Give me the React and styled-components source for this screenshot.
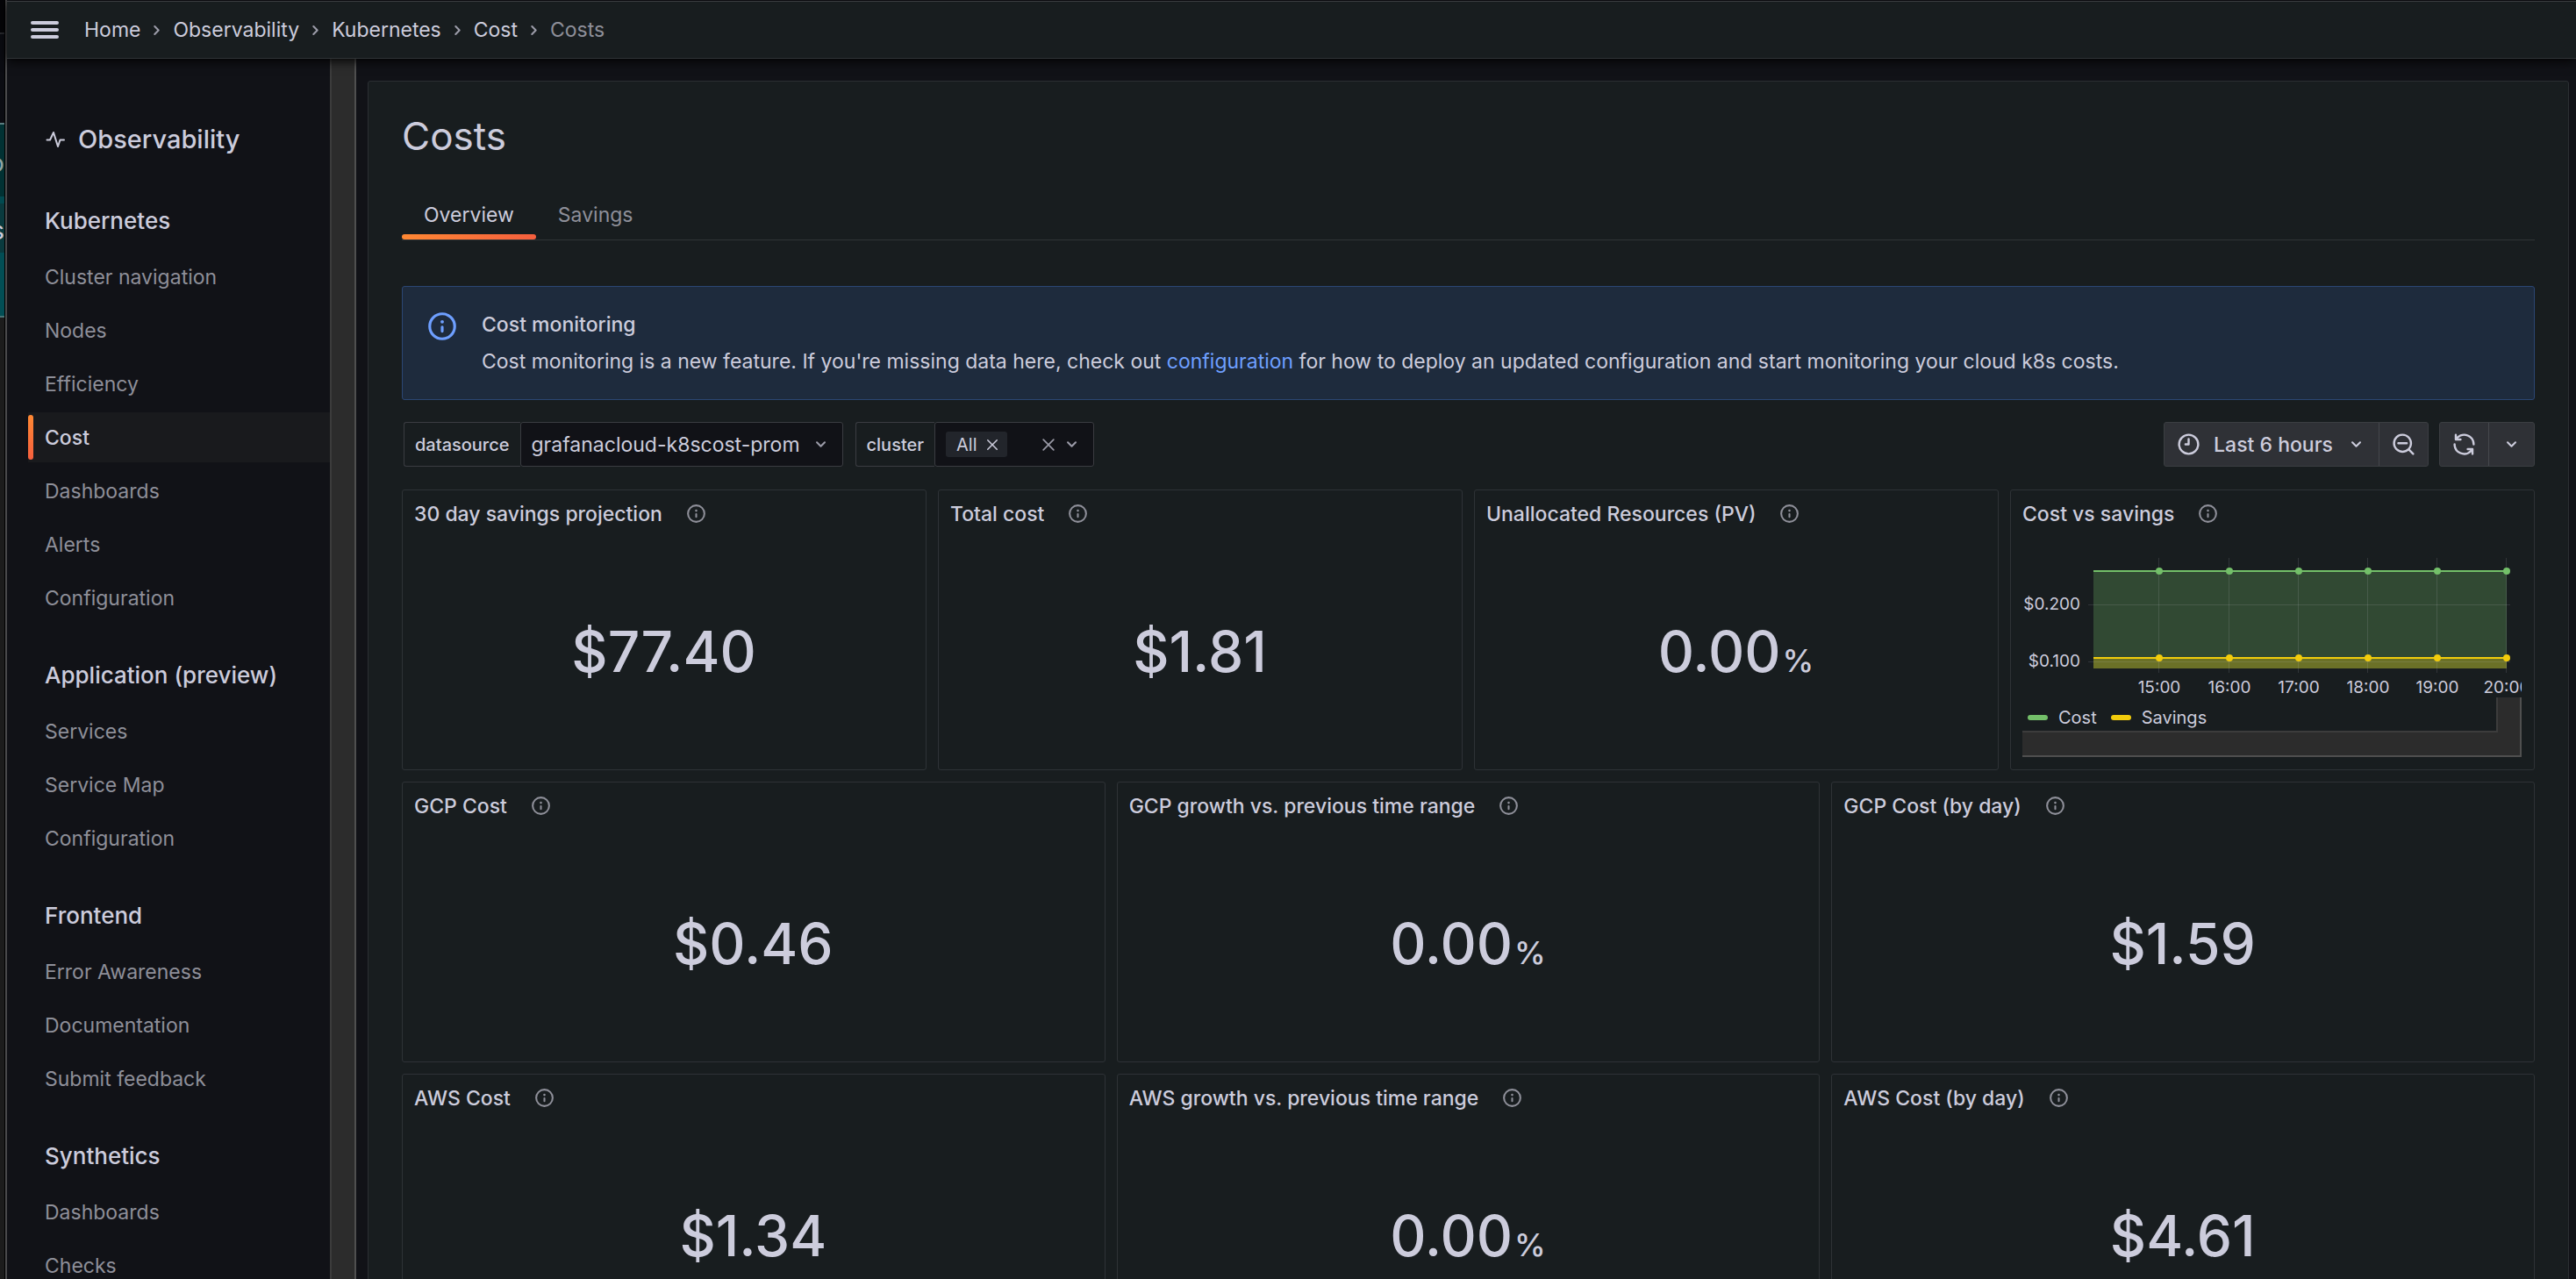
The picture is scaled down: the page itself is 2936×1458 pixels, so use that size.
import React from 'react';
import styled, { createGlobalStyle } from 'styled-components';

const GlobalStyle = createGlobalStyle`
  * {
    box-sizing: border-box;
  }
  body {
    margin: 0;
    background: #111217;
    color: #ccccdc;
    font-family: Inter, 'Liberation Sans', sans-serif;
    font-size: 23px;
    line-height: 34px;
  }
  button, input, select {
    font: inherit;
    color: inherit;
  }
`

const Screen = styled.div`
  display: flex;
  height: 100vh;
  overflow: hidden;
`

// edge of the window that sits behind this one
const Behind = styled.div`
  flex: 0 0 6px;
  display: flex;
  flex-direction: column;
  overflow: hidden;
  border-right: 1px solid #000;
  background: #1c1c1c;
`
const BehindBlock = styled.div`
  flex: 0 0 ${(props) => props.$height}px;
  display: flex;
  align-items: center;
  justify-content: flex-end;
  background: ${(props) => props.$color};
  color: ${(props) => props.$text || '#ccccdc'};
  font-size: 29px;
`
const BehindText = styled.span`
  padding-top: 6px;
`

const Window = styled.div`
  flex: 1;
  min-width: 0;
  display: flex;
  flex-direction: column;
  border-left: 2px solid #4a4a4c;
`

const Header = styled.header`
  position: relative;
  z-index: 1;
  flex: 0 0 66px;
  display: flex;
  align-items: center;
  gap: 29px;
  margin-top: 1px;
  padding-left: 27px;
  background: #181d1f;
  border-top: 1px solid #3a3d40;
  border-bottom: 1px solid #303437;
  box-shadow: 0 2px 12px #000;
`
const MenuButton = styled.button`
  display: flex;
  padding: 0;
  border: 0;
  background: none;
`
const Crumbs = styled.nav`
  display: flex;
  align-items: center;
  gap: 6px;
`
const Crumb = styled.a`
  color: ${(props) => (props.$current ? '#8e8f99' : '#ccccdc')};
  text-decoration: none;
`

const Body = styled.div`
  flex: 1;
  min-height: 0;
  display: flex;
`
const Sidebar = styled.aside`
  flex: 0 0 368px;
  overflow: hidden;
  padding: 64px 0 0 24px;
`
const SidebarTitle = styled.h2`
  display: flex;
  align-items: center;
  gap: 15px;
  margin: 0 0 34px;
  padding-left: 20px;
  font-size: 29px;
  font-weight: 500;
  line-height: 56px;
`
const NavGroup = styled.section`
  display: flex;
  flex-direction: column;
  gap: 4px;
  margin-bottom: 29px;
`
const NavHeading = styled.h3`
  margin: 0;
  padding-left: 19px;
  font-size: 26px;
  font-weight: 500;
  line-height: 62px;
`
const NavLink = styled.a`
  display: flex;
  align-items: center;
  height: 57px;
  color: ${(props) => (props.$active ? '#ccccdc' : '#8e8f99')};
  background: ${(props) => (props.$active ? '#191a1d' : 'none')};
  font-weight: ${(props) => (props.$active ? 500 : 400)};
  text-decoration: none;

  &::before {
    content: '';
    width: 6px;
    height: 51px;
    margin-right: 13px;
    border-radius: 3px;
    background: ${(props) => (props.$active ? 'linear-gradient(#ff8833, #f55f3e)' : 'none')};
  }
`
const ScrollTrack = styled.div`
  flex: 0 0 30px;
  background: #2c2c2c;
  border-left: 2px solid #3c3c3c;
  border-right: 2px solid #4f4f4f;
`

const Main = styled.main`
  flex: 1;
  min-width: 0;
  padding: 25px 8px 0 13px;
`
const Page = styled.div`
  min-height: 100%;
  padding: 34px 38px 0;
  background: #181d1f;
  border: 1px solid #2b2f33;
  border-radius: 3px;
`
const Title = styled.h1`
  margin: 0;
  font-size: 44px;
  font-weight: 400;
  line-height: 56px;
`
const Tabs = styled.div`
  display: flex;
  margin-top: 34px;
  border-bottom: 1px solid #303437;
`
const Tab = styled.button`
  position: relative;
  padding: 11px 25px;
  border: 0;
  background: none;
  color: ${(props) => (props.$active ? '#ccccdc' : '#8e8f99')};

  &::after {
    content: '';
    position: absolute;
    left: 0;
    right: 0;
    bottom: 0;
    height: 6px;
    border-radius: 3px;
    background: ${(props) => (props.$active ? 'linear-gradient(90deg, #ff8833, #f55f3e)' : 'none')};
  }
`

const Alert = styled.div`
  display: flex;
  gap: 26px;
  margin-top: 52px;
  padding: 26px;
  background: #1e2b3d;
  border: 1px solid #2b4673;
  border-radius: 3px;
`
const AlertBody = styled.div`
  display: flex;
  flex-direction: column;
  gap: 8px;
`
const AlertTitle = styled.div`
  font-weight: 500;
`
const TextLink = styled.a`
  color: #6e9fff;
  text-decoration: none;
`

const Controls = styled.div`
  display: flex;
  justify-content: space-between;
  margin: 25px 0 26px 2px;
`
const ControlSide = styled.div`
  display: flex;
  gap: ${(props) => props.$gap}px;
`
const Field = styled.div`
  display: flex;
  height: 51px;
`
const FieldLabel = styled.label`
  display: flex;
  align-items: center;
  padding: 0 12px;
  border: 1px solid #3a3c41;
  border-right: 0;
  border-radius: 3px 0 0 3px;
  font-size: 20px;
  font-weight: 500;
`
const SelectBox = styled.div`
  display: grid;
  align-items: center;
  width: 368px;
  background: #111217;
  border: 1px solid #3a3c41;
  border-radius: 3px;

  > * {
    grid-area: 1 / 1;
  }
  > svg {
    justify-self: end;
    margin-right: 13px;
    pointer-events: none;
  }
`
const Select = styled.select`
  height: 49px;
  padding: 0 48px 0 12px;
  border: 0;
  background: none;
  appearance: none;
`
const MultiBox = styled.div`
  display: flex;
  align-items: center;
  gap: 4px;
  width: 182px;
  padding: 0 12px;
  background: #111217;
  border: 1px solid #3a3c41;
  border-radius: 3px;
`
const Chip = styled.span`
  display: flex;
  align-items: center;
  gap: 8px;
  height: 29px;
  padding: 0 8px 0 12px;
  border-radius: 3px;
  background: #22252b;
  font-size: 20px;
`
const ChipInput = styled.input`
  flex: 1;
  width: 0;
  min-width: 0;
  padding: 0;
  border: 0;
  background: none;
  outline: none;
`
const IconButton = styled.button`
  display: flex;
  padding: 0;
  border: 0;
  background: none;
`

const ButtonGroup = styled.div`
  display: flex;
  height: 51px;
  background: #2f3136;
  border: 1px solid #3b3e42;
  border-radius: 3px;
`
const ToolButton = styled.button`
  display: flex;
  align-items: center;
  justify-content: center;
  gap: 14px;
  padding: 0 13px;
  border: 0;
  background: none;
  font-weight: 500;

  & + & {
    border-left: 1px solid #45474c;
  }
`

const Grid = styled.div`
  display: grid;
  grid-template-columns: repeat(${(props) => props.$columns}, minmax(0, 1fr));
  gap: 13px;
  margin-bottom: 13px;
`
const Card = styled.section`
  display: flex;
  flex-direction: column;
  height: 320px;
  padding: 0 14px 13px 13px;
  border: 1px solid #2e3236;
  border-radius: 3px;
`
const CardHeader = styled.header`
  flex: 0 0 53px;
  display: flex;
  align-items: center;
  gap: 26px;
`
const CardTitle = styled.h2`
  margin: 0;
  font-size: 23px;
  font-weight: 500;
`
const Value = styled.div`
  flex: 1;
  display: flex;
  align-items: baseline;
  justify-content: center;
  gap: 2px;
  padding-top: 91px;
  font-size: 64px;
  font-weight: 500;
  line-height: 80px;
`
const Unit = styled.span`
  font-size: 36px;
`

const ChartSvg = styled.svg`
  display: block;
  flex: 0 0 183px;
  width: 100%;
  overflow: hidden;
  font-size: 19px;
`
const LegendScroller = styled.div`
  padding: 0 25px 26px 0;
  background: #2c2c2c;
  border-right: 2px solid #4f4f4f;
  border-bottom: 2px solid #4f4f4f;
`
const Legend = styled.div`
  display: flex;
  gap: 16px;
  height: 40px;
  padding: 7px 0 0 6px;
  background: #181d1f;
  border-right: 2px solid #3c3c3c;
  border-bottom: 2px solid #3c3c3c;
`
const LegendItem = styled.span`
  display: flex;
  align-items: center;
  gap: 12px;
  font-size: 20px;
  line-height: 30px;

  &::before {
    content: '';
    width: 23px;
    height: 6px;
    border-radius: 3px;
    background: ${(props) => props.$color};
  }
`

const paths = {
  info: 'M12,2A10,10,0,1,0,22,12,10,10,0,0,0,12,2Zm0,18a8,8,0,1,1,8-8A8,8,0,0,1,12,20Zm0-8.5a1,1,0,0,0-1,1v3a1,1,0,0,0,2,0v-3A1,1,0,0,0,12,11.5Zm0-4a1.25,1.25,0,1,0,1.25,1.25A1.25,1.25,0,0,0,12,7.5Z',
  clock: 'M12,2A10,10,0,1,0,22,12,10,10,0,0,0,12,2Zm0,18a8,8,0,1,1,8-8A8,8,0,0,1,12,20ZM12,6a1,1,0,0,0-1,1v4H9a1,1,0,0,0,0,2h3a1,1,0,0,0,1-1V7A1,1,0,0,0,12,6Z',
  zoomOut: 'M21.71,20.29,18,16.61A9,9,0,1,0,16.61,18l3.68,3.68a1,1,0,0,0,1.42,0A1,1,0,0,0,21.71,20.29ZM11,18a7,7,0,1,1,7-7A7,7,0,0,1,11,18ZM15,10H7a1,1,0,0,0,0,2h8a1,1,0,0,0,0-2Z',
  sync: 'M19.91,15.51H15.38a1,1,0,0,0,0,2h2.4A8,8,0,0,1,4,12a1,1,0,0,0-2,0,10,10,0,0,0,16.88,7.23V21a1,1,0,0,0,2,0V16.5A1,1,0,0,0,19.91,15.51ZM12,2A10,10,0,0,0,5.12,4.77V3a1,1,0,0,0-2,0V7.5a1,1,0,0,0,1,1h4.5a1,1,0,0,0,0-2H6.22A8,8,0,0,1,20,12a1,1,0,0,0,2,0A10,10,0,0,0,12,2Z',
  down: 'M17,9.17a1,1,0,0,0-1.41,0L12,12.71,8.46,9.17a1,1,0,0,0-1.41,0,1,1,0,0,0,0,1.42l4.24,4.24a1,1,0,0,0,1.42,0L17,10.59A1,1,0,0,0,17,9.17Z',
  right: 'M14.83,11.29,10.59,7.05a1,1,0,0,0-1.42,0,1,1,0,0,0,0,1.41L12.71,12,9.17,15.54a1,1,0,0,0,0,1.41,1,1,0,0,0,.71.29,1,1,0,0,0,.71-.29l4.24-4.24A1,1,0,0,0,14.83,11.29Z',
  times: 'M13.41,12l6.3-6.29a1,1,0,1,0-1.42-1.42L12,10.59,5.71,4.29A1,1,0,0,0,4.29,5.71L10.59,12l-6.3,6.29a1,1,0,0,0,0,1.42,1,1,0,0,0,1.42,0L12,13.41l6.29,6.3a1,1,0,0,0,1.42,0,1,1,0,0,0,0-1.42Z'
}

const Icon = ({ name, size = 25, color = 'currentColor' }) => (
  <svg width={size} height={size} viewBox="0 0 24 24" fill={color} aria-hidden="true">
    <path d={paths[name]} />
  </svg>
)

const nav = [
  { title: 'Kubernetes', items: ['Cluster navigation', 'Nodes', 'Efficiency', 'Cost', 'Dashboards', 'Alerts', 'Configuration'] },
  { title: 'Application (preview)', items: ['Services', 'Service Map', 'Configuration'] },
  { title: 'Frontend', items: ['Error Awareness', 'Documentation', 'Submit feedback'] },
  { title: 'Synthetics', items: ['Dashboards', 'Checks'] }
]

const summary = [
  { title: '30 day savings projection', value: '$77.40' },
  { title: 'Total cost', value: '$1.81' },
  { title: 'Unallocated Resources (PV)', value: '0.00', unit: '%' }
]

const providers = [
  [
    { title: 'GCP Cost', value: '$0.46' },
    { title: 'GCP growth vs. previous time range', value: '0.00', unit: '%' },
    { title: 'GCP Cost (by day)', value: '$1.59' }
  ],
  [
    { title: 'AWS Cost', value: '$1.34' },
    { title: 'AWS growth vs. previous time range', value: '0.00', unit: '%' },
    { title: 'AWS Cost (by day)', value: '$4.61' }
  ]
]

const hours = [
  { label: '15:00', x: 156 },
  { label: '16:00', x: 236 },
  { label: '17:00', x: 315 },
  { label: '18:00', x: 394 },
  { label: '19:00', x: 473 },
  { label: '20:00', x: 552 }
]

const Panel = ({ title, children }) => (
  <Card>
    <CardHeader>
      <CardTitle>{title}</CardTitle>
      <Icon name="info" color="#8e8f99" />
    </CardHeader>
    {children}
  </Card>
)

const Stat = ({ title, value, unit }) => (
  <Panel title={title}>
    <Value>
      {value}
      {unit && <Unit>{unit}</Unit>}
    </Value>
  </Panel>
)

const CostChart = () => (
  <ChartSvg role="img" aria-label="Cost vs savings">
    <rect x="81" y="39" width="471" height="111" fill="#73bf69" fillOpacity="0.28" />
    <rect x="81" y="138" width="471" height="12" fill="#f2cc0c" fillOpacity="0.3" />
    <g stroke="#ccccdc" strokeOpacity="0.14" strokeWidth="1">
      {hours.map(({ x }) => <path key={x} d={`M${x - 0.5} 24V155`} />)}
      <path d="M75 77.5H556M75 142.5H556" />
    </g>
    <path d="M81 39H552" stroke="#73bf69" strokeWidth="2" />
    <path d="M81 138H552" stroke="#f2cc0c" strokeWidth="2" />
    {hours.map(({ x }) => (
      <g key={x}>
        <circle cx={x} cy="39" r="4" fill="#73bf69" />
        <circle cx={x} cy="138" r="4" fill="#f2cc0c" />
      </g>
    ))}
    <g fill="#ccccdc">
      <text x="66" y="83" textAnchor="end">$0.200</text>
      <text x="66" y="148" textAnchor="end">$0.100</text>
      {hours.map(({ label, x }) => (
        <text key={label} x={x} y="178" textAnchor="middle">{label}</text>
      ))}
    </g>
  </ChartSvg>
)

const Navigation = () => (
  <Sidebar>
    <SidebarTitle>
      <svg width="22" height="22" viewBox="0 0 22 22" fill="none" stroke="currentColor" strokeWidth="2" strokeLinecap="round" strokeLinejoin="round" aria-hidden="true">
        <path d="M1.5 11.5H5L9 3L14 19L16.5 11.5H21" />
      </svg>
      Observability
    </SidebarTitle>
    {nav.map(({ title, items }) => (
      <NavGroup key={title}>
        <NavHeading>{title}</NavHeading>
        {items.map((item) => (
          <NavLink key={item} href="#" $active={item === 'Cost'}>{item}</NavLink>
        ))}
      </NavGroup>
    ))}
  </Sidebar>
)

const Toolbar = () => (
  <Controls>
    <ControlSide $gap={14}>
      <Field>
        <FieldLabel htmlFor="datasource">datasource</FieldLabel>
        <SelectBox>
          <Select id="datasource">
            <option>grafanacloud-k8scost-prom</option>
          </Select>
          <Icon name="down" color="#9b9ba8" />
        </SelectBox>
      </Field>
      <Field>
        <FieldLabel htmlFor="cluster">cluster</FieldLabel>
        <MultiBox>
          <Chip>
            All
            <IconButton aria-label="Remove All"><Icon name="times" size={18} /></IconButton>
          </Chip>
          <ChipInput id="cluster" />
          <IconButton aria-label="Clear"><Icon name="times" size={20} color="#9b9ba8" /></IconButton>
          <IconButton aria-label="Open"><Icon name="down" color="#9b9ba8" /></IconButton>
        </MultiBox>
      </Field>
    </ControlSide>
    <ControlSide $gap={12}>
      <ButtonGroup>
        <ToolButton>
          <Icon name="clock" size={29} />
          Last 6 hours
          <Icon name="down" />
        </ToolButton>
        <ToolButton aria-label="Zoom out"><Icon name="zoomOut" size={29} /></ToolButton>
      </ButtonGroup>
      <ButtonGroup>
        <ToolButton aria-label="Refresh"><Icon name="sync" size={29} /></ToolButton>
        <ToolButton aria-label="Refresh interval"><Icon name="down" /></ToolButton>
      </ButtonGroup>
    </ControlSide>
  </Controls>
)

const crumbs = ['Home', 'Observability', 'Kubernetes', 'Cost', 'Costs']

const App = () => (
  <Screen>
    <GlobalStyle />
    <Behind aria-hidden="true">
      <BehindBlock $height={37} $color="#050508" />
      <BehindBlock $height={2} $color="#2a2b30" />
      <BehindBlock $height={101} $color="#0b0c12" />
      <BehindBlock $height={2} $color="#5a7d80" />
      <BehindBlock $height={82} $color="#013133" $text="#8fa5a5"><BehindText>o</BehindText></BehindBlock>
      <BehindBlock $height={8} $color="#024a50" />
      <BehindBlock $height={56} $color="#0a3a3e"><BehindText>s</BehindText></BehindBlock>
      <BehindBlock $height={72} $color="#024e55" />
      <BehindBlock $height={2} $color="#4a7375" />
    </Behind>
    <Window>
      <Header>
        <MenuButton aria-label="Toggle menu">
          <svg width="32" height="22" viewBox="0 0 32 22" fill="currentColor" aria-hidden="true">
            <rect y="1" width="32" height="4" rx="2" />
            <rect y="9" width="32" height="4" rx="2" />
            <rect y="17" width="32" height="4" rx="2" />
          </svg>
        </MenuButton>
        <Crumbs aria-label="Breadcrumbs">
          {crumbs.map((crumb, index) => (
            <React.Fragment key={crumb}>
              {index > 0 && <Icon name="right" color="#9b9ba8" />}
              <Crumb href="#" $current={index === crumbs.length - 1}>{crumb}</Crumb>
            </React.Fragment>
          ))}
        </Crumbs>
      </Header>
      <Body>
        <Navigation />
        <ScrollTrack />
        <Main>
          <Page>
            <Title>Costs</Title>
            <Tabs role="tablist">
              <Tab role="tab" aria-selected="true" $active>Overview</Tab>
              <Tab role="tab" aria-selected="false">Savings</Tab>
            </Tabs>
            <Alert>
              <Icon name="info" size={38} color="#6e9fff" />
              <AlertBody>
                <AlertTitle>Cost monitoring</AlertTitle>
                <div>
                  Cost monitoring is a new feature. If you're missing data here, check out{' '}
                  <TextLink href="#">configuration</TextLink>{' '}
                  for how to deploy an updated configuration and start monitoring your cloud k8s costs.
                </div>
              </AlertBody>
            </Alert>
            <Toolbar />
            <Grid $columns={4}>
              {summary.map((stat) => <Stat key={stat.title} {...stat} />)}
              <Panel title="Cost vs savings">
                <CostChart />
                <LegendScroller>
                  <Legend>
                    <LegendItem $color="#73bf69">Cost</LegendItem>
                    <LegendItem $color="#f2cc0c">Savings</LegendItem>
                  </Legend>
                </LegendScroller>
              </Panel>
            </Grid>
            {providers.map((stats) => (
              <Grid key={stats[0].title} $columns={3}>
                {stats.map((stat) => <Stat key={stat.title} {...stat} />)}
              </Grid>
            ))}
          </Page>
        </Main>
      </Body>
    </Window>
  </Screen>
)
export default App;
